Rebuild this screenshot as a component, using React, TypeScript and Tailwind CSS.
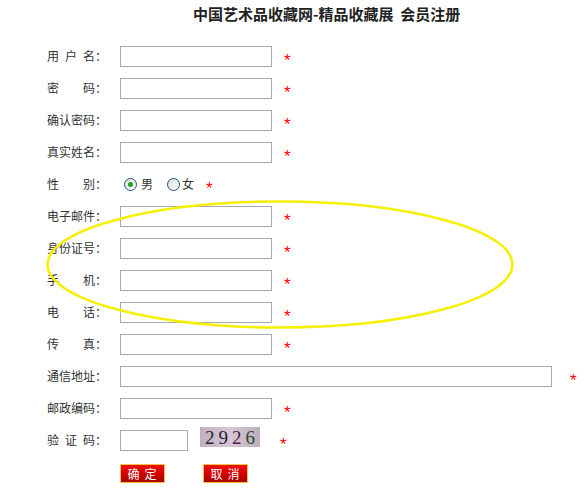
import React from 'react';

const font = { fontFamily: '"Noto Sans CJK SC", "Liberation Sans", sans-serif' };

interface Row {
  label: string[];
}

// label chars are spread over a 48px box, colon follows
function Label({ chars }: { chars: string[] }) {
  return (
    <div className="w-[73px] shrink-0 flex items-center text-[12px] text-[#333]">
      <div className="w-[48px] flex justify-between">
        {chars.map((c, i) => (
          <span key={i}>{c}</span>
        ))}
      </div>
      <span>：</span>
    </div>
  );
}

function Star({ ml = 'ml-[12px]' }: { ml?: string }) {
  return (
    <span className={`${ml} pt-[9px] text-[17px] leading-none text-[#ff0000]`} style={{ fontFamily: '"Liberation Sans", sans-serif' }}>
      *
    </span>
  );
}

function Input({ w = 'w-[152px]' }: { w?: string }) {
  return <input type="text" className={`${w} h-[21px] border border-[#a5acb2] bg-white outline-none`} />;
}

function Radio({ checked }: { checked?: boolean }) {
  return (
    <span className="w-[13px] h-[13px] rounded-full border border-[#1c5180] bg-gradient-to-br from-[#dcdcd7] to-white flex items-center justify-center">
      {checked && <span className="w-[5px] h-[5px] rounded-full bg-[#21a121]" />}
    </span>
  );
}

const rows: Row[] = [
  { label: ['用', '户', '名'] },
  { label: ['密', '码'] },
  { label: ['确', '认', '密', '码'] },
  { label: ['真', '实', '姓', '名'] },
];

const rows2: Row[] = [
  { label: ['电', '子', '邮', '件'] },
  { label: ['身', '份', '证', '号'] },
  { label: ['手', '机'] },
  { label: ['电', '话'] },
  { label: ['传', '真'] },
];

function Field({ row }: { row: Row }) {
  return (
    <div className="h-[32px] flex items-center">
      <Label chars={row.label} />
      <Input />
      <Star />
    </div>
  );
}

function RedButton({ text }: { text: string }) {
  return (
    <button className="w-[45px] h-[19px] border border-[#f6c343] bg-gradient-to-b from-[#f01010] via-[#d40000] to-[#a80000] text-white text-[12px] leading-[17px] tracking-[5px] pl-[4px]">
      {text}
    </button>
  );
}

export default function App() {
  return (
    <div className="relative w-[586px] h-[492px] bg-white overflow-hidden" style={font}>
      <div className="h-[40px] pt-[2px] pl-[193px] text-[15px] font-bold text-[#222] leading-[24px] whitespace-pre">
        中国艺术品收藏网-精品收藏展  会员注册
      </div>

      <div className="pl-[47px] flex flex-col">
        {rows.map((r, i) => (
          <Field key={i} row={r} />
        ))}

        <div className="h-[32px] flex items-center text-[12px] text-[#333]">
          <Label chars={['性', '别']} />
          <span className="ml-[4px] flex items-center gap-[4px]">
            <Radio checked />
            <span>男</span>
          </span>
          <span className="ml-[14px] flex items-center gap-[2px]">
            <Radio />
            <span>女</span>
          </span>
          <Star />
        </div>

        {rows2.map((r, i) => (
          <Field key={i} row={r} />
        ))}

        <div className="h-[32px] flex items-center">
          <Label chars={['通', '信', '地', '址']} />
          <Input w="w-[432px]" />
          <Star ml="ml-[18px]" />
        </div>

        <div className="h-[32px] flex items-center">
          <Label chars={['邮', '政', '编', '码']} />
          <Input />
          <Star />
        </div>

        <div className="h-[32px] flex items-center">
          <Label chars={['验', '证', '码']} />
          <Input w="w-[68px]" />
          <div className="ml-[12px] mb-[6px] w-[60px] h-[20px] bg-gradient-to-r from-[#c2aebf] via-[#d6c8d3] to-[#bfaebd] flex items-center justify-center gap-[4px] text-[19px] leading-none" style={{ fontFamily: '"Liberation Serif", serif' }}>
            <span className="text-[#1f2a36]">2</span>
            <span className="text-[#161d38]">9</span>
            <span className="text-[#4a1c4c]">2</span>
            <span className="text-[#2c4a2a]">6</span>
          </div>
          <Star ml="ml-[20px]" />
        </div>

        <div className="h-[32px] pt-[3px] pl-[73px] flex items-center gap-[38px]">
          <RedButton text="确定" />
          <RedButton text="取消" />
        </div>
      </div>

      <svg className="absolute left-0 top-0 pointer-events-none" width="586" height="492">
        <ellipse cx="280" cy="264.5" rx="232.5" ry="63" fill="none" stroke="#f5f000" strokeWidth="2.5" />
      </svg>
    </div>
  );
}
